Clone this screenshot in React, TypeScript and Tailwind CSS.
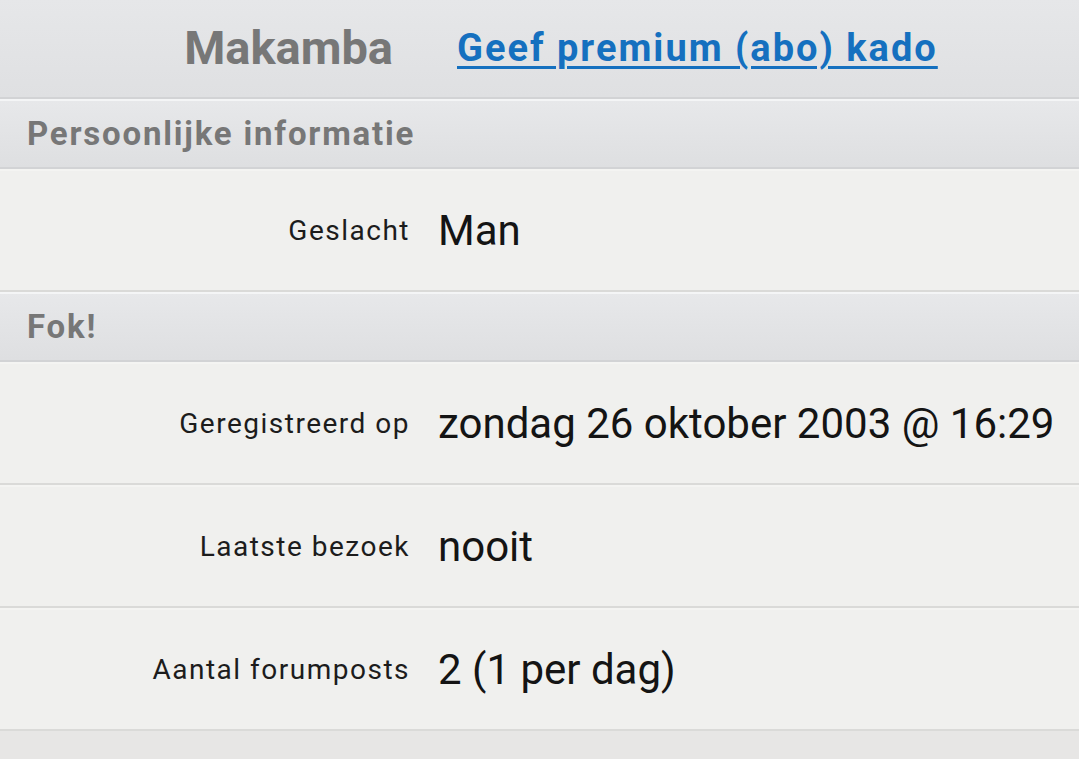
const rows: { label: string; value: string }[][] = [
  [{ label: "Geslacht", value: "Man" }],
  [
    { label: "Geregistreerd op", value: "zondag 26 oktober 2003 @ 16:29" },
    { label: "Laatste bezoek", value: "nooit" },
    { label: "Aantal forumposts", value: "2 (1 per dag)" },
  ],
];

const sections = ["Persoonlijke informatie", "Fok!"];

function SectionHeader({ title }: { title: string }) {
  return (
    <div className="flex h-[70px] items-center border-t-2 border-b-2 border-t-[#f4f5f6] border-b-[#d2d3d5] bg-gradient-to-b from-[#e7e8ea] to-[#dedfe1] pl-[27px]">
      <h2 className="text-[33px] font-bold tracking-[1.8px] text-[#777777]">{title}</h2>
    </div>
  );
}

function InfoRow({ label, value }: { label: string; value: string }) {
  return (
    <div className="flex h-[123px] items-center border-t-2 border-b-2 border-t-[#f4f4f2] border-b-[#dadad8] bg-[#f0f0ee]">
      <div className="w-[426px] shrink-0 pr-[16px] text-right text-[28px] tracking-[1.5px] text-[#1c1c1c]">
        {label}
      </div>
      <div className="pl-[12px] text-[42px] text-[#141414]">{value}</div>
    </div>
  );
}

export default function App() {
  return (
    <div className="min-h-[759px] w-[1079px] bg-[#e7e6e5] font-['Roboto','Liberation_Sans',sans-serif]">
      <div className="flex h-[99px] items-center border-b-2 border-b-[#d2d3d5] bg-gradient-to-b from-[#e6e7e9] to-[#dfe0e2]">
        <div className="w-[424px] shrink-0 pr-[31px] text-right text-[47px] font-bold text-[#777777]">
          Makamba
        </div>
        <a
          className="pl-[33px] text-[38px] font-bold tracking-[2px] text-[#1570bf] underline decoration-[3px] underline-offset-[5px]"
          href="#"
        >
          Geef premium (abo) kado
        </a>
      </div>
      {sections.map((title, i) => (
        <div key={title}>
          <SectionHeader title={title} />
          {rows[i].map((row) => (
            <InfoRow key={row.label} label={row.label} value={row.value} />
          ))}
        </div>
      ))}
      <div className="h-[2px]" />
    </div>
  );
}
